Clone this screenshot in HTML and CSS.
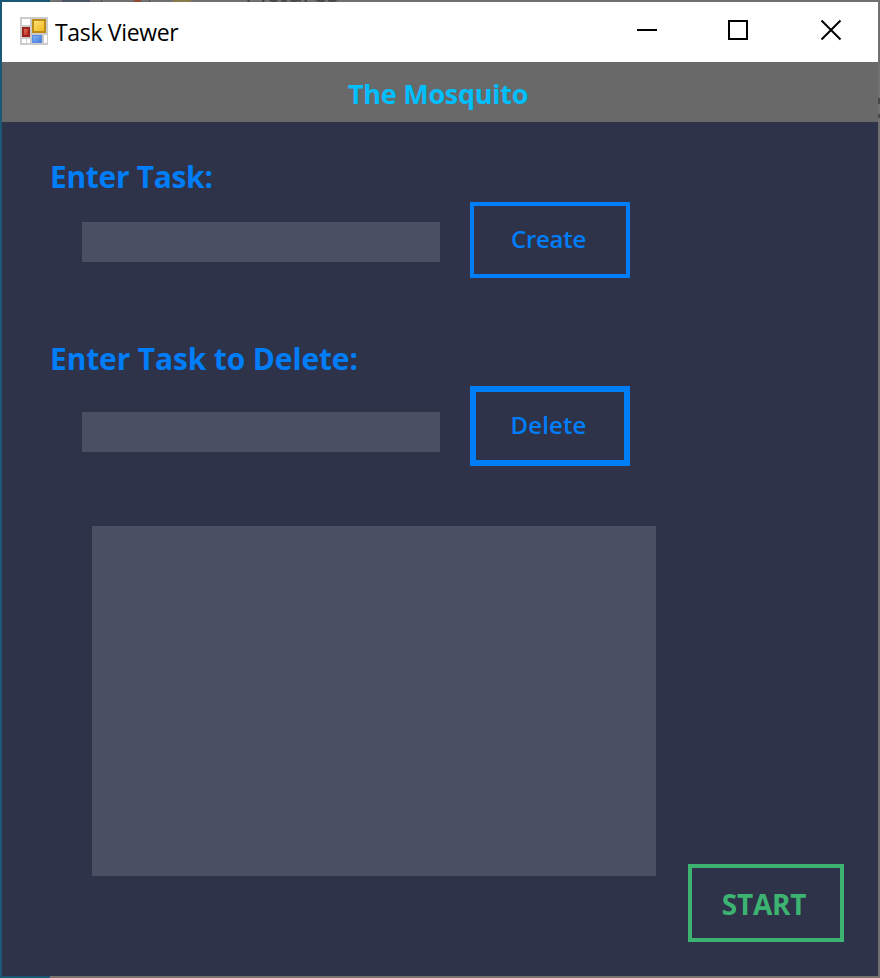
FILE: index.html
```html
<!DOCTYPE html>
<html lang="en">
<head>
<meta charset="utf-8">
<title>Task Viewer</title>
<link rel="stylesheet" href="styles.css">
</head>
<body>
<div class="window">
  <header class="titlebar">
    <svg class="app-icon" width="28" height="28" viewBox="0 0 28 28">
      <defs>
        <linearGradient id="y" x1="0" y1="0" x2="1" y2="1"><stop offset="0" stop-color="#ffe680"/><stop offset="1" stop-color="#f0b414"/></linearGradient>
        <linearGradient id="r" x1="0" y1="0" x2="1" y2="1"><stop offset="0" stop-color="#e8786a"/><stop offset="1" stop-color="#b41e14"/></linearGradient>
        <linearGradient id="b" x1="0" y1="0" x2="1" y2="1"><stop offset="0" stop-color="#8cb8fa"/><stop offset="1" stop-color="#3c78dc"/></linearGradient>
      </defs>
      <rect width="28" height="28" fill="#cbcbcb"/>
      <path fill="#fff" d="M2 2h8v6H2zM2 22h4v4H2zM7 22h3v4H7zM24 18h3v8h-3z"/>
      <rect x="13" y="3" width="12" height="12" fill="url(#y)" stroke="#bb8d18" stroke-width="2"/>
      <rect x="3" y="11" width="6" height="8" fill="url(#r)" stroke="#9c241c" stroke-width="2"/>
      <rect x="12.5" y="18.5" width="9" height="7" fill="url(#b)" stroke="#5b8be0"/>
    </svg>
    <span class="title">Task Viewer</span>
    <svg class="controls" width="206" height="22" viewBox="0 0 206 22" fill="none" stroke="#000" stroke-width="2">
      <path d="M0 11h20M92 2h18v18H92z"/>
      <path d="M184.5 1.5l19 19M203.5 1.5l-19 19"/>
    </svg>
  </header>
  <div class="banner"><span>The Mosquito</span></div>
  <main class="content">
    <label class="label label-create" for="create">Enter Task:</label>
    <div class="row row-create">
      <input class="field" id="create" type="text">
      <button class="button create"><span>Create</span></button>
    </div>
    <label class="label label-delete" for="delete">Enter Task to Delete:</label>
    <div class="row row-delete">
      <input class="field" id="delete" type="text">
      <button class="button delete"><span>Delete</span></button>
    </div>
    <div class="row row-list">
      <div class="list"></div>
      <button class="button start"><span>START</span></button>
    </div>
  </main>
</div>
<div class="behind-top">
  <i class="chip chip-doc"></i><i class="chip chip-frame"></i><i class="chip chip-mark"></i><i class="chip chip-folder"></i>
  <span class="behind-text">Pictures</span>
</div>
<div class="behind-bottom"></div>
<div class="behind-right"></div>
</body>
</html>
```
FILE: styles.css
```css
* { box-sizing: border-box; }
body {
  margin: 0;
  width: 880px;
  height: 978px;
  padding: 2px;
  overflow: hidden;
  position: relative;
  background: linear-gradient(90deg, #1a5876 50px, #707070 50px);
  font-family: "Open Sans", "Noto Sans", sans-serif;
}
.window { width: 876px; height: 974px; background: #2e3349; }
.titlebar {
  display: flex;
  height: 60px;
  padding: 15px 35px 0 18px;
  background: #fff;
}
.app-icon { flex: none; }
.title {
  margin-left: 7px;
  font-size: 23px;
  line-height: 31px;
  letter-spacing: -0.33px;
  color: #000;
  white-space: nowrap;
}
.controls { margin: 2px 0 0 auto; }
.banner {
  height: 60px;
  padding-left: 346px;
  background: #696969;
  color: #00bfff;
  font-size: 27px;
  font-weight: 700;
  line-height: 64px;
  letter-spacing: -0.28px;
  white-space: nowrap;
}
.content { display: flex; flex-direction: column; }
.label {
  margin-left: 48px;
  height: 40px;
  font-size: 30px;
  font-weight: 700;
  line-height: 41px;
  color: #007ef9;
  white-space: nowrap;
}
.label-create { margin-top: 34px; letter-spacing: -0.33px; }
.label-delete { margin-top: 61px; line-height: 39px; letter-spacing: -0.15px; }
.row { display: flex; }
.row-create { margin: 6px 0 0 80px; }
.row-delete { margin: 7px 0 0 80px; }
.field {
  width: 358px;
  height: 40px;
  margin: 20px 30px 0 0;
  padding: 0 8px;
  border: 0;
  outline: 0;
  background: #4a4f63;
  color: #c8c8c8;
  font: 24px "Open Sans", sans-serif;
}
.row-delete .field { margin-top: 26px; }
.button {
  display: block;
  width: 160px;
  height: 76px;
  padding: 0 3px 2px 0;
  border: 4px solid #007ef9;
  background: transparent;
  color: #007ef9;
  font: 600 24px/30px "Open Sans", sans-serif;
  text-align: center;
  white-space: nowrap;
}
.create { letter-spacing: -0.25px; }
.delete { height: 80px; border-width: 6px; letter-spacing: 0.1px; }
.row-list { margin: 60px 0 0 90px; }
.list { width: 564px; height: 350px; background: #4a4f63; }
.start {
  width: 156px;
  height: 78px;
  margin: 338px 0 0 32px;
  padding: 1px 4px 0 0;
  border-color: #3cb371;
  color: #3cb371;
  font-size: 28px;
  font-weight: 700;
  letter-spacing: -0.2px;
}
.behind-top {
  position: absolute;
  inset: 0 0 auto 50px;
  height: 2px;
  overflow: hidden;
}
.chip { position: absolute; top: 0; height: 2px; }
.chip-doc { left: 12px; width: 28px; background: #4b5768; }
.chip-frame { left: 51px; width: 49px; border: solid #505050; border-width: 0 1px; }
.chip-mark { left: 84px; width: 7px; background: #8f4b35; }
.chip-folder { left: 123px; width: 18px; background: #897a4e; }
.behind-text {
  position: absolute;
  left: 195px;
  top: -20px;
  font-size: 25px;
  line-height: 25px;
  color: #454545;
}
.behind-bottom {
  position: absolute;
  inset: auto 0 0 50px;
  height: 2px;
  background: #77736f;
}
.behind-right {
  position: absolute;
  right: 0;
  top: 98px;
  width: 2px;
  height: 20px;
  border: solid #484848;
  border-width: 6px 0 4px;
}
```
